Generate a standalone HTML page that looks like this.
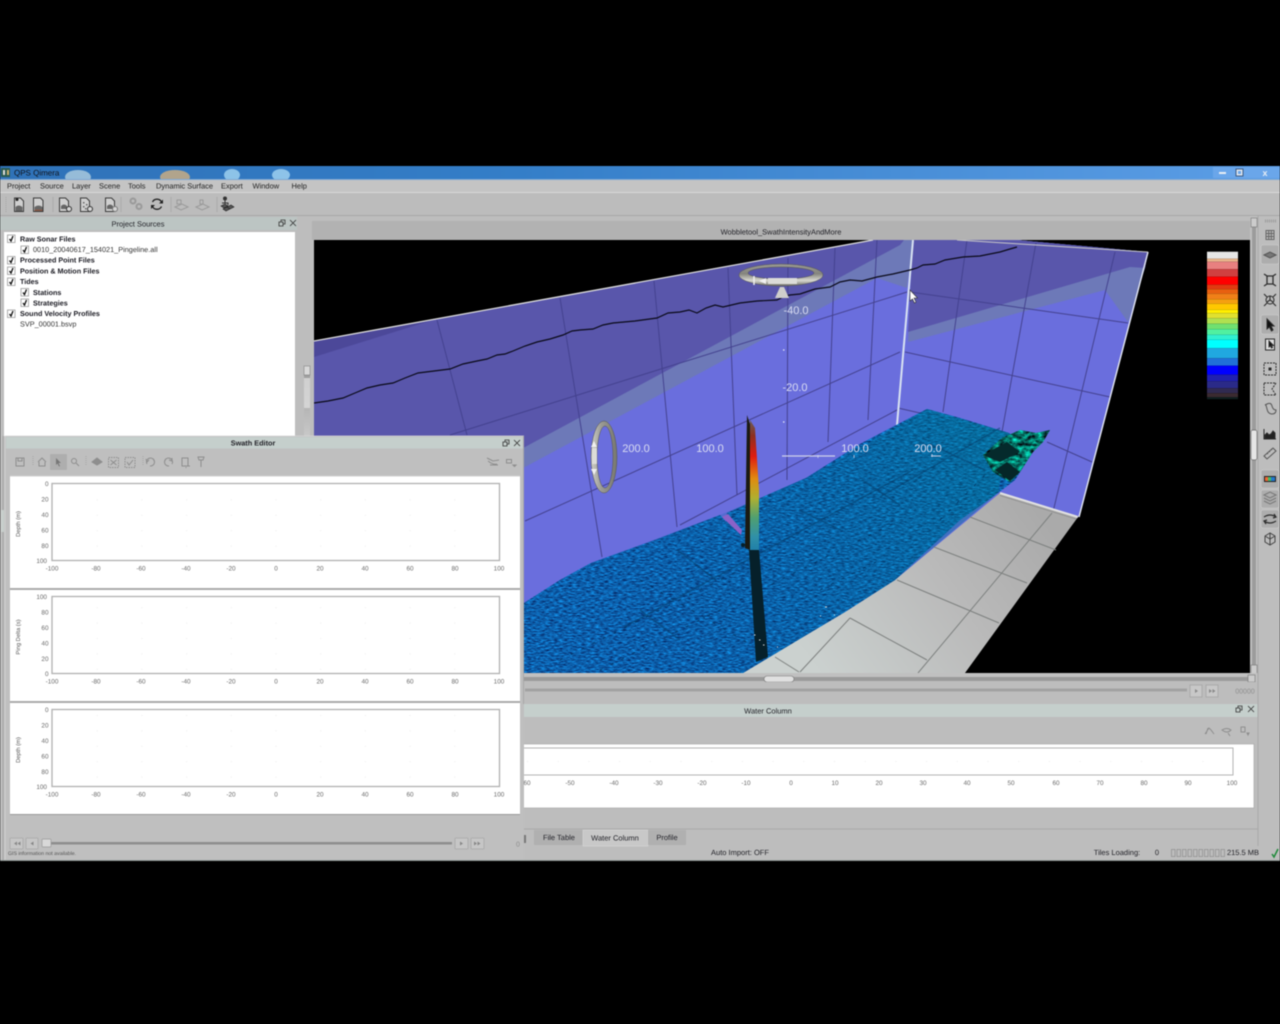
<!DOCTYPE html>
<html><head><meta charset="utf-8"><title>QPS Qimera</title>
<style>
html,body{margin:0;padding:0;background:#000;width:1280px;height:1024px;overflow:hidden}
svg{display:block}
#root{filter:blur(.4px)}
text{font-family:"Liberation Sans",sans-serif;text-rendering:geometricPrecision}
.m{font-size:7.5px;fill:#222}
.b{font-size:7.2px;font-weight:bold;fill:#1a1a22}
.t{font-size:7.5px;fill:#222228;text-anchor:middle}
.x{font-size:6.4px;fill:#6a6a6a;text-anchor:middle}
.d{font-size:5.8px;fill:#555;text-anchor:middle}
.y{font-size:6.4px;fill:#6a6a6a;text-anchor:end}
.l{font-size:11px;fill:#d9dcf2;text-anchor:middle}
.ic{fill:none;stroke:#2c2c2c;stroke-width:1}
.dis{fill:none;stroke:#8e8e8e;stroke-width:1}
.g{stroke:#44428f;stroke-width:1;fill:none}
.f{stroke:#7d807f;stroke-width:1;fill:none}
</style></head><body>
<svg id="root" width="1280" height="1024" viewBox="0 0 1280 1024" xmlns="http://www.w3.org/2000/svg">
<defs>
<linearGradient id="tb" x1="0" x2="1" y1="0" y2="0"><stop offset="0" stop-color="#2f72b8"/><stop offset=".4" stop-color="#347ec8"/><stop offset="1" stop-color="#5c9ee6"/></linearGradient>
<linearGradient id="bar" x1="0" x2="0" y1="0" y2="1"><stop offset="0" stop-color="#808080"/><stop offset=".5" stop-color="#a8a8a8"/><stop offset="1" stop-color="#d0d0d0"/></linearGradient>
<linearGradient id="ring" x1="0" x2="0" y1="0" y2="1"><stop offset="0" stop-color="#9a9a92"/><stop offset=".45" stop-color="#85857e"/><stop offset=".75" stop-color="#d8d8d0"/><stop offset="1" stop-color="#6a6a64"/></linearGradient>
<linearGradient id="ring2" x1="0" x2="1" y1="0" y2="0"><stop offset="0" stop-color="#cfcfc8"/><stop offset=".4" stop-color="#9a9a94"/><stop offset="1" stop-color="#77776f"/></linearGradient>
<linearGradient id="fan" x1="0" x2="0" y1="0" y2="1"><stop offset="0" stop-color="#6a5e58"/><stop offset=".12" stop-color="#8c3020"/><stop offset=".28" stop-color="#e01c10"/><stop offset=".45" stop-color="#e08a10"/><stop offset=".6" stop-color="#b0b030"/><stop offset=".75" stop-color="#50a070"/><stop offset=".9" stop-color="#3090a8"/><stop offset="1" stop-color="#2080a8"/></linearGradient>
<linearGradient id="floor" gradientUnits="userSpaceOnUse" x1="1040" y1="510" x2="820" y2="673"><stop offset="0" stop-color="#aaaaaa"/><stop offset=".45" stop-color="#bababa"/><stop offset="1" stop-color="#cbd1cf"/></linearGradient>
<linearGradient id="sb" gradientUnits="userSpaceOnUse" x1="600" y1="640" x2="1000" y2="430"><stop offset="0" stop-color="#0a50b0" stop-opacity=".1"/><stop offset=".5" stop-color="#006a9c" stop-opacity=".25"/><stop offset="1" stop-color="#007a90" stop-opacity=".5"/></linearGradient>
<filter id="noise" x="0" y="0" width="100%" height="100%" color-interpolation-filters="sRGB">
<feTurbulence type="fractalNoise" baseFrequency=".22 .7" numOctaves="3" seed="7"/>
<feColorMatrix type="matrix" values=".1 0 0 0 0  .8 0 0 0 -.02  1 0 0 0 .17  0 0 0 0 1"/>
<feComposite in2="SourceGraphic" operator="in"/>
</filter>
<filter id="rock" x="0" y="0" width="100%" height="100%" color-interpolation-filters="sRGB">
<feTurbulence type="fractalNoise" baseFrequency=".16 .28" numOctaves="3" seed="3"/>
<feColorMatrix type="matrix" values="0 0 0 0 .02  1.5 0 0 0 -.3  1.2 0 0 0 -.2  0 0 0 0 1"/>
<feComposite in2="SourceGraphic" operator="in"/>
</filter>
<pattern id="dots" patternUnits="userSpaceOnUse" x="52" y="484" width="44.7" height="15.4"><rect x="0" y="0" width="1" height="1" fill="#ececec"/></pattern>
<pattern id="dots2" patternUnits="userSpaceOnUse" x="527" y="748" width="30.7" height="13"><rect x="0" y="0" width="1" height="1" fill="#ececec"/></pattern>
</defs>

<rect width="1280" height="1024" fill="#000"/>
<rect x="0" y="166" width="1280" height="695" fill="#bdbdbd"/>
<!-- title bar -->
<rect x="0" y="166" width="1280" height="13" fill="url(#tb)"/>
<ellipse cx="78" cy="177" rx="13" ry="7" fill="#b9d4e2" opacity=".75"/>
<ellipse cx="175" cy="177" rx="15" ry="7" fill="#c8ad84" opacity=".85"/>
<ellipse cx="232" cy="175" rx="8" ry="6" fill="#a5d6f2" opacity=".8"/>
<ellipse cx="281" cy="175" rx="9" ry="6" fill="#a5d6f2" opacity=".8"/>
<rect x="1" y="168" width="9" height="9" fill="#2a5a50"/><rect x="3" y="170" width="2" height="5" fill="#ddd"/><rect x="7" y="170" width="2" height="5" fill="#c8b070"/>
<text x="14" y="175.5" font-size="8" fill="#10141c">QPS Qimera</text>
<rect x="1213" y="167" width="67" height="11" fill="#6aa6ea"/>
<rect x="1219" y="172" width="7" height="2" fill="#e8eef5"/>
<rect x="1236" y="169" width="7" height="7" fill="#dfe6ef" stroke="#3d5c84"/><rect x="1238" y="171" width="3" height="3" fill="#6aa6ea"/>
<text x="1265" y="176" font-size="9" font-weight="bold" fill="#e8eef5" text-anchor="middle">x</text>
<!-- menu -->
<rect x="0" y="179" width="1280" height="1" fill="#7fa8d4"/>
<rect x="0" y="180" width="1280" height="13" fill="#c4c4c4"/>
<rect x="0" y="192" width="1280" height="1" fill="#d8d8d8"/>
<text class="m" x="7" y="188.5">Project</text>
<text class="m" x="40" y="188.5">Source</text>
<text class="m" x="72" y="188.5">Layer</text>
<text class="m" x="99" y="188.5">Scene</text>
<text class="m" x="128" y="188.5">Tools</text>
<text class="m" x="156" y="188.5">Dynamic Surface</text>
<text class="m" x="221" y="188.5">Export</text>
<text class="m" x="252.500" y="188.5">Window</text>
<text class="m" x="291.500" y="188.5">Help</text>
<!-- toolbar -->
<rect x="0" y="193" width="1280" height="23" fill="#bcbcbc"/>
<rect x="0" y="215" width="1280" height="1" fill="#a8a8a8"/>
<g fill="#cfcfcf" stroke="#3a3a3a" stroke-width="1">
<path d="M14.500 198h6l3 3v10.500h-9z"/>
<path d="M33.500 198h7l2.500 2.500v11h-9.500z"/>
<path d="M59.500 198h6l3 3v10.500h-9z"/>
<path d="M80.500 198h6l3 3v10.500h-9z"/>
<path d="M105.500 198h6l3 3v10.500h-9z"/>
</g>
<g fill="#666">
<path d="M15.500 211v-4q3-3 7 0v4z"/><circle cx="17" cy="199.500" r="1.500" fill="#222"/>
<path d="M34.500 211v-4q4-3 8 0v4z"/><path d="M34.500 211h8v-1.500h-8z" fill="#8a5a48"/>
<path d="M61 206q3-3 6 0v3h-6z"/>
<rect x="83" y="202" width="1.500" height="1.500"/><rect x="86" y="204" width="1.500" height="1.500"/><rect x="83" y="206" width="1.500" height="1.500"/><rect x="85" y="208" width="1.500" height="1.500"/>
<path d="M107 206q3-3 6 0v3h-6z"/>
</g>
<circle cx="69" cy="209" r="2.500" fill="#d5d5d5" stroke="#333"/>
<circle cx="90" cy="209" r="2.500" fill="#d5d5d5" stroke="#333"/>
<circle cx="115" cy="209" r="2.500" fill="#d5d5d5" stroke="#777"/>
<g fill="none" stroke="#9a9a9a">
<circle cx="133" cy="201" r="2.500" stroke-width="2"/><circle cx="139" cy="206.500" r="2.500" stroke-width="2"/>
<path d="M175 207l7-3 6 3-7 3zM177 200h4v4h-4zM196 207l7-3 6 3-7 3zM200 200h3v4h-3z"/>
</g>
<path d="M152.500 202a5 5 0 0 1 9 0M161.500 206.500a5 5 0 0 1-9 0" fill="none" stroke="#222" stroke-width="1.300"/>
<path d="M163 199.500v4h-4zM151 209v-4h4z" fill="#222"/>
<circle cx="225" cy="198.500" r="2" fill="#333"/><path d="M225 200.500v2.500M222 203h6v2" fill="none" stroke="#333"/>
<path d="M221 206l4-2 3 2-4 2zM227 207l4-2 3 2-4 2zM223 209l4-2 3 2-4 2z" fill="#555" stroke="#222" stroke-width=".6"/>
<path d="M6 197v16" stroke="#a4a4a4" stroke-dasharray="1 1"/>
<path d="M53 197v15M121 197v15M171 197v15M217 197v15" stroke="#aaa"/>

<!-- left panel -->
<rect x="0" y="217" width="297" height="13" fill="#bcc5c3"/>
<text class="t" x="138" y="226.500">Project Sources</text>
<path d="M279 222h4v4h-4zM281 222v-2h4v4h-2" fill="none" stroke="#333" stroke-width=".8"/>
<path d="M290 220l6 6M296 220l-6 6" stroke="#333" stroke-width=".8"/>
<rect x="4" y="232" width="291" height="205" fill="#fff"/>
<g fill="#fff" stroke="#9a9a9a" stroke-width=".8">
<rect x="7.500" y="235" width="7.500" height="7.500"/><rect x="21" y="246" width="7.500" height="7.500"/><rect x="7.500" y="256.500" width="7.500" height="7.500"/><rect x="7.500" y="267" width="7.500" height="7.500"/><rect x="7.500" y="278" width="7.500" height="7.500"/><rect x="21" y="288.500" width="7.500" height="7.500"/><rect x="21" y="299" width="7.500" height="7.500"/><rect x="7.500" y="310" width="7.500" height="7.500"/>
</g>
<g fill="none" stroke="#111" stroke-width="1.300">
<path d="M9.500 239l1.500 2 2-5"/><path d="M23 250l1.500 2 2-5"/><path d="M9.500 260.500l1.500 2 2-5"/><path d="M9.500 271l1.500 2 2-5"/><path d="M9.500 282l1.500 2 2-5"/><path d="M23 292.500l1.500 2 2-5"/><path d="M23 303l1.500 2 2-5"/><path d="M9.500 314l1.500 2 2-5"/>
</g>
<text class="b" x="20" y="241.500">Raw Sonar Files</text>
<text x="33" y="252" font-size="7.300" fill="#333">0010_20040617_154021_Pingeline.all</text>
<text class="b" x="20" y="262.500">Processed Point Files</text>
<text class="b" x="20" y="273.500">Position &amp; Motion Files</text>
<text class="b" x="20" y="284">Tides</text>
<text class="b" x="33" y="295">Stations</text>
<text class="b" x="33" y="305.500">Strategies</text>
<text class="b" x="20" y="316">Sound Velocity Profiles</text>
<text x="20" y="326.500" font-size="7.300" fill="#333">SVP_00001.bsvp</text>
<rect x="304" y="366" width="6" height="70" fill="url(#bar)" opacity=".6"/>
<rect x="304" y="366" width="6" height="9" fill="#d8d8d8" stroke="#777" stroke-width=".5"/>
<rect x="304" y="378" width="6" height="30" fill="#dcdcdc" opacity=".8"/>

<!-- view header -->
<rect x="312" y="221" width="940" height="19" fill="#b2b2b2"/>
<text class="t" x="781" y="234.500">Wobbletool_SwathIntensityAndMore</text>

<!-- 3D scene -->
<svg x="314" y="240" width="936" height="433" viewBox="314 240 936 433">
<rect x="314" y="240" width="936" height="433" fill="#000"/>
<polygon points="314,341 873,240 1017,240 1148,252 1079,517 1000,493 800,673 314,673" fill="#6a6edd"/>
<polygon points="314,341 873,240 913,240 907,288 877,278 525,467 314,560" fill="#6d79b8"/>
<polygon points="314,341 873,240 904,240 900,245 525,447 314,540" fill="#5956ab"/>
<polygon points="314,341 436,319 314,357" fill="#4c4899"/>
<polygon points="913,240 1017,240 1148,252 1145,268 1128,322 1105,290 908,342" fill="#6d79b8"/>
<polygon points="913,240 1017,240 1148,252 1145,268 1130,267 908,332" fill="#5956ab"/>
<g class="g">
<path d="M437 320L467 435M560 298L602 557M654 281L677 527M728 268L737 495M788 258L787 480M835 248L828 442M877 240L868 420"/>
<path d="M450 435L907 292M525 521L900 352M680 525L897 410"/>
<path d="M910 292L1128 323M905 352L1110 397M898 408L1003 432M1047 442L1092 462"/>
<path d="M967 240L943 412M1036 243L1002 432M1115 252L1053 512"/>
</g>
<path d="M314 341L873 240" stroke="#dcdcdc" stroke-width="1.300"/>
<path d="M913 240L897 425" stroke="#d8e2f2" stroke-width="2"/>
<path d="M957 240L1148 252" stroke="#c8c8c8" stroke-width="1"/>
<path d="M1148 252L1079 517" stroke="#dce0ee" stroke-width="1.500"/>
<!-- floor -->
<polygon points="1000,493 1078,517 965,673 738,673 895,580" fill="url(#floor)"/>
<path d="M1000 493L1078 517" stroke="#e2e2e2" stroke-width="2"/>
<path d="M1000 495.500L1076 519" stroke="#8c8c8c" stroke-width=".8"/>
<g class="f">
<path d="M970 517L1056 550M934 547L1027 583M897 580L999 623M850 618L927 660M775 657L799 672M1052 513L918 673M850 618L800 672"/>
</g>
<!-- seabed -->
<polygon points="524,603 560,580 591,563 655,540 720,515 726,522 727,513 765,496 806,478 860,444 927,409 960,418 1009,433 1034,450 1015,480 998,493 960,520 895,580 845,612 798,640 738,676 524,676" fill="#0a62b0"/>
<polygon points="524,603 560,580 591,563 655,540 720,515 726,522 727,513 765,496 806,478 860,444 927,409 960,418 1009,433 1034,450 1015,480 998,493 960,520 895,580 845,612 798,640 738,676 524,676" fill="#0a62b0" filter="url(#noise)"/>
<polygon points="524,603 591,563 720,515 806,478 927,409 1009,433 998,493 895,580 798,640 738,676 524,676" fill="url(#sb)"/>
<polygon points="722,517 728,514 742,530 741,535" fill="#8a62c8"/>
<g stroke="#063c6a" stroke-width="1.500" fill="none" opacity=".55">
<path d="M624 627L913 470M677 550L716 580M799 510L841 530M862 480L900 505M930 444L985 470M1000 428L880 497M640 610L680 640"/>
</g>
<g stroke="#04305c" stroke-width="1" fill="none" stroke-dasharray="3 9" opacity=".8">
<path d="M560 660L760 560M600 670L900 520M640 580L760 650M820 590L880 560M940 520L990 470"/>
</g>
<!-- rock -->
<polygon points="983,455 1002,438 1020,430 1036,433 1050,430 1043,442 1033,452 1020,472 1010,482 993,472" fill="#0c5a60"/>
<polygon points="983,455 1002,438 1020,430 1036,433 1050,430 1043,442 1033,452 1020,472 1010,482 993,472" fill="#0c5a60" filter="url(#rock)"/>
<polygon points="983,455 1007,442 1020,452 1000,462" fill="#052a2c"/>
<polygon points="995,470 1007,462 1020,472 1010,481" fill="#052628"/>
<!-- swath fan -->
<polygon points="749,550 759,550 768,657 756,662" fill="#06202a"/>
<polygon points="747,415 750,424 750,550 745,548" fill="#1a1a12"/>
<polygon points="750,420 755,428 759,490 759,550 750,550" fill="url(#fan)"/>
<circle cx="743" cy="545" r="2" fill="#06202c"/>
<path d="M754 635h1.500M759 640h1.500M763 645h1.500M777 647h1M825 607h2M820 616h1M834 615h1" stroke="#dcdcdc" fill="none"/>
<!-- navigation line -->
<path d="M314 403L328 401 343 398 355 393 367 388 380 385 393 383 405 378 418 373 434 371 450 369 463 364 477 361 487 359 497 355 505 354 513 351 525 346 537 342 550 339 563 335 572 331 580 330 593 329 603 325 613 323 635 321 657 318 668 313 680 312 689 310 697 313 706 308 715 305 723 307 740 303 757 301 777 300 785 296 790 295 800 294 815 289 830 287 840 282 850 280 862 281 877 277 893 274 910 270 917 268 923 265 935 264 945 260 963 257 980 256 1000 252 1010 249 1017 247" fill="none" stroke="#0a0a18" stroke-width="1.200"/>
<!-- axis -->
<path d="M782 456H835" stroke="#d0d3ea" stroke-width="1.300"/>
<path d="M818 455v3M854 455v3M932 454v3" stroke="#d0d3ea" stroke-width=".8"/>
<path d="M783 350h1.500M783 422h1.500" stroke="#e6e8f6" stroke-width="1.300"/>
<path d="M931 456h10" stroke="#c8cbe4"/>
<text class="l" x="636" y="452">200.0</text>
<text class="l" x="710" y="452">100.0</text>
<text class="l" x="855" y="452">100.0</text>
<text class="l" x="928" y="452">200.0</text>
<text class="l" x="796" y="314">-40.0</text>
<text class="l" x="795" y="391">-20.0</text>
<!-- compass -->
<polygon points="780,287 784,287 789,298 775,298" fill="#cfcfcb"/>
<path fill-rule="evenodd" fill="url(#ring)" stroke="#555" stroke-width=".5" d="M739 275a42 11 0 1 0 84 0a42 11 0 1 0-84 0zM748 273a33 6 0 1 1 66 0a33 6 0 1 1-66 0z"/>
<path d="M754 276V285" stroke="#f0f0f0" stroke-width="1.500"/>
<polygon points="759,281 766,278 766,284" fill="#f0f0f0"/>
<rect x="768" y="278" width="29" height="6" fill="#dcdcd8"/>
<!-- pitch ring -->
<path fill-rule="evenodd" fill="url(#ring2)" stroke="#555" stroke-width=".5" d="M591 457a13 36 0 1 0 26 0a13 36 0 1 0-26 0zM597 457a8 31 0 1 1 16 0a8 31 0 1 1-16 0z" />
<rect x="592" y="448" width="5" height="16" fill="#dcdcd8"/>
<polygon points="594,441 597,447 591,447" fill="#f0f0f0"/><polygon points="594,475 597,469 591,469" fill="#f0f0f0"/>
<!-- cursor -->
<path d="M910 290v11l2.500-2 2 4 1.500-1-2-4h3.500z" fill="#fff" stroke="#333" stroke-width=".6"/>
<!-- colorbar -->
<g>
<rect x="1207" y="251.700" width="31" height="7" fill="#e6e6e6"/>
<rect x="1207" y="258.700" width="31" height="3" fill="#e8b58c"/>
<rect x="1207" y="261.700" width="31" height="7.500" fill="#e88080"/>
<rect x="1207" y="269.200" width="31" height="7.500" fill="#d04040"/>
<rect x="1207" y="276.700" width="31" height="8" fill="#ff0000"/>
<rect x="1207" y="284.700" width="31" height="4.500" fill="#e23a10"/>
<rect x="1207" y="289.200" width="31" height="4.500" fill="#e86010"/>
<rect x="1207" y="293.700" width="31" height="5.500" fill="#f08018"/>
<rect x="1207" y="299.200" width="31" height="4.500" fill="#f5a010"/>
<rect x="1207" y="303.700" width="31" height="6" fill="#ffc800"/>
<rect x="1207" y="309.700" width="31" height="3.500" fill="#ffee00"/>
<rect x="1207" y="313.200" width="31" height="5" fill="#e0e030"/>
<rect x="1207" y="318.200" width="31" height="5.500" fill="#b0e050"/>
<rect x="1207" y="323.700" width="31" height="5.500" fill="#70e070"/>
<rect x="1207" y="329.200" width="31" height="5.500" fill="#50f0a0"/>
<rect x="1207" y="334.700" width="31" height="5" fill="#30f0d0"/>
<rect x="1207" y="339.700" width="31" height="8.500" fill="#00ffff"/>
<rect x="1207" y="348.200" width="31" height="10" fill="#20a8e0"/>
<rect x="1207" y="358.200" width="31" height="7.500" fill="#2070d8"/>
<rect x="1207" y="365.700" width="31" height="9" fill="#0000ff"/>
<rect x="1207" y="374.700" width="31" height="6.500" fill="#2020b0"/>
<rect x="1207" y="381.200" width="31" height="7" fill="#2a2a88"/>
<rect x="1207" y="388.200" width="31" height="5" fill="#302a50"/>
<rect x="1207" y="393.200" width="31" height="4" fill="#3a2a30"/>
<rect x="1207" y="397.200" width="31" height="2" fill="#102020"/>
</g>
</svg>

<!-- vertical scrollbar -->
<rect x="1250" y="216" width="8" height="462" fill="#c0c0c0"/>
<rect x="1252" y="220" width="4" height="455" fill="#9c9c9c"/>
<rect x="1251" y="218" width="6" height="9" fill="#ccc" stroke="#666" stroke-width=".5"/>
<rect x="1251" y="430" width="6" height="30" rx="2" fill="#e6e6e6" stroke="#666" stroke-width=".7"/>
<rect x="1251" y="665" width="6" height="9" fill="#ccc" stroke="#666" stroke-width=".5"/>
<!-- horizontal scrollbar -->
<rect x="523" y="673" width="735" height="8" fill="#c0c0c0"/>
<rect x="523" y="677" width="730" height="4" fill="#9a9a9a"/>
<rect x="764" y="676" width="30" height="6" rx="3" fill="#e0e0e0" stroke="#777" stroke-width=".6"/>
<rect x="1248" y="675" width="7" height="7" fill="#ccc" stroke="#666" stroke-width=".5"/>
<!-- player bar -->
<rect x="523" y="682" width="735" height="22" fill="#bdbdbd"/>
<rect x="525" y="688.500" width="662" height="3" fill="#a2a2a2"/>
<rect x="1190" y="685" width="12" height="12" fill="#c8c8c8" stroke="#aaa"/>
<rect x="1206" y="685" width="12" height="12" fill="#c8c8c8" stroke="#aaa"/>
<path d="M1195 689v4l3-2zM1209 689v4l3-2zM1212.500 689v4l3-2z" fill="#8a8a8a"/>
<text x="1245" y="693.500" font-size="7" fill="#8f8f8f" text-anchor="middle">00000</text>
<!-- water column -->
<rect x="523" y="704" width="735" height="13" fill="#c5cfcc"/>
<text class="t" x="768" y="713.500">Water Column</text>
<path d="M1236 708h4v4h-4zM1238 708v-2h4v4h-2" fill="none" stroke="#333" stroke-width=".8"/>
<path d="M1248 706l6 6M1254 706l-6 6" stroke="#333" stroke-width=".8"/>
<g class="dis"><path d="M1205 734l4-6 2 2 3 4M1208 728l-2 6"/><path d="M1222 730q5-3 9 0-4 4-9 0zM1228 733l2 3"/><rect x="1241" y="727" width="4" height="5"/><path d="M1247 733l2 0-1 2z" fill="#666"/></g>
<rect x="523" y="744" width="731" height="64" fill="#fff" stroke="#aaa" stroke-width=".7"/>
<rect x="523" y="748" width="710" height="27" fill="#fff" stroke="#b4b4b4"/>
<rect x="524" y="749" width="708" height="25" fill="url(#dots2)"/>
<g>
<text class="x" x="527" y="785">60</text><text class="x" x="570" y="785">-50</text><text class="x" x="614" y="785">-40</text><text class="x" x="658" y="785">-30</text><text class="x" x="702" y="785">-20</text><text class="x" x="746" y="785">-10</text><text class="x" x="791" y="785">0</text><text class="x" x="835" y="785">10</text><text class="x" x="879" y="785">20</text><text class="x" x="923" y="785">30</text><text class="x" x="967" y="785">40</text><text class="x" x="1011" y="785">50</text><text class="x" x="1056" y="785">60</text><text class="x" x="1100" y="785">70</text><text class="x" x="1144" y="785">80</text><text class="x" x="1188" y="785">90</text><text class="x" x="1232" y="785">100</text>
</g>
<!-- tabs -->
<path d="M523 829H1258" stroke="#a8a8a8"/>
<rect x="534" y="830" width="49" height="15" fill="#b0b0b0"/>
<rect x="583" y="830" width="65" height="16" fill="#c8c8c8" stroke="#d8d8d8" stroke-width=".6"/>
<rect x="648" y="830" width="38" height="15" fill="#b0b0b0"/>
<text class="t" x="559" y="840">File Table</text>
<text class="t" x="615" y="840.500">Water Column</text>
<text class="t" x="667" y="840">Profile</text>

<!-- right toolbar -->
<rect x="1258" y="216" width="22" height="630" fill="#bdbdbd"/>
<path d="M1258 216V846" stroke="#a8a8a8"/>
<path d="M1265 221h11" stroke="#9a9a9a" stroke-dasharray="1 1" stroke-width="3"/>
<rect x="1261" y="245" width="18" height="19" rx="2" fill="#adadad" stroke="#d0d0d0" stroke-width=".6"/>
<rect x="1261" y="315" width="18" height="19" rx="2" fill="#adadad" stroke="#d0d0d0" stroke-width=".6"/>
<rect x="1261" y="470" width="18" height="18" rx="2" fill="#adadad" stroke="#d0d0d0" stroke-width=".6"/>
<rect x="1261" y="490" width="18" height="18" rx="2" fill="#adadad" stroke="#d0d0d0" stroke-width=".6"/>
<rect x="1261" y="510" width="18" height="18" rx="2" fill="#adadad" stroke="#d0d0d0" stroke-width=".6"/>
<g class="ic">
<path d="M1266 230.500h8v9h-8zM1266 233.500h8M1266 236.500h8M1268.700 230.500v9M1271.300 230.500v9" stroke="#666"/>
<path d="M1264 255l6-3 6 3-6 3z" fill="#777" stroke="#555"/>
<path d="M1264 274l3 2h6l3-2M1264 286l3-2h6l3 2M1267 276v8M1273 276v8" stroke-width="1.300"/>
<circle cx="1270" cy="300" r="4"/><path d="M1264 294l3 3M1276 294l-3 3M1264 306l3-3M1276 306l-3-3M1270 296v4l3 2M1270 300l-3 2" stroke-width="1.100"/>
<path d="M1267 319v10l2.500-2 2 4 1.500-1-2-4h3z" fill="#111"/>
<rect x="1265.500" y="339" width="9" height="11" fill="#ddd"/><path d="M1269 341v6l1.500-1 1 2 1-.500-1-2h2z" fill="#111"/>
<rect x="1264" y="363" width="12" height="12" stroke-dasharray="2 1"/><rect x="1269" y="368" width="2" height="2" fill="#222"/>
<path d="M1264 383h12l-4 6 4 6h-12z" stroke-dasharray="2 1"/>
<path d="M1267 404q4-2 5 2t4 4q0 4-4 4t-5-5-2-4z" stroke="#555"/>
<path d="M1264 429v10h12" stroke-width="1"/><path d="M1265 439v-4l2-2 2 2 2-1 2-3 2 2v6z" fill="#222"/>
<path d="M1264 456l9-8 3 3-9 8zM1267 453l1 1M1269 451l1 1M1271 449l1 1" stroke="#555"/>
<path d="M1264 495l6-3 6 3-6 3zM1264 498l6 3 6-3M1264 501l6 3 6-3" stroke="#777"/>
<path d="M1264 517q6-4 12 0M1276 521q-6 4-12 0M1274 514l2 3-3 1M1266 524l-2-3 3-1" stroke-width="1.200"/>
<path d="M1265 536l5-3 5 3v6l-5 3-5-3zM1270 533v12M1265 536l5 3 5-3" stroke="#444"/>
</g>
<rect x="1264" y="476" width="12" height="6" fill="#222"/>
<rect x="1265" y="477" width="3" height="4" fill="#e63"/><rect x="1268" y="477" width="3" height="4" fill="#4b6"/><rect x="1271" y="477" width="4" height="4" fill="#27c"/>

<!-- status -->
<text class="t" x="740" y="855">Auto Import: OFF</text>
<text class="t" x="1117" y="855">Tiles Loading:</text>
<text class="t" x="1157" y="855">0</text>
<g fill="none" stroke="#8e8e8e" stroke-width=".7">
<rect x="1171.500" y="849.500" width="3.500" height="7"/><rect x="1177" y="849.500" width="3.500" height="7"/><rect x="1182.500" y="849.500" width="3.500" height="7"/><rect x="1188" y="849.500" width="3.500" height="7"/><rect x="1193.500" y="849.500" width="3.500" height="7"/><rect x="1199" y="849.500" width="3.500" height="7"/><rect x="1204.500" y="849.500" width="3.500" height="7"/><rect x="1210" y="849.500" width="3.500" height="7"/><rect x="1215.500" y="849.500" width="3.500" height="7"/><rect x="1221" y="849.500" width="3.500" height="7"/>
</g>
<text class="t" x="1243" y="855">215.5 MB</text>
<path d="M1272 854l2 3 4-8" fill="none" stroke="#1f8a3a" stroke-width="1.500"/>

<!-- swath editor window -->
<rect x="0" y="436" width="5" height="425" fill="#bdbdbd"/>
<path d="M3 436V861" stroke="#a4a4a4"/>
<rect x="1" y="510" width="3" height="22" fill="#c8cfcc"/>
<rect x="5" y="436" width="519" height="425" fill="#bfbfbf"/>
<path d="M5 436H524M5 436V861" stroke="#d8d8d8" stroke-width=".7"/>
<path d="M523.500 436V704" stroke="#a8a8a8"/>
<rect x="6" y="437" width="517" height="11.500" fill="#c5cfcc"/>
<text class="t" x="253" y="445.500" font-weight="bold" style="font-size:7.3px">Swath Editor</text>
<path d="M503 442h4v4h-4zM505 442v-2h4v4h-2" fill="none" stroke="#333" stroke-width=".8"/>
<path d="M514 440l6 6M520 440l-6 6" stroke="#333" stroke-width=".8"/>
<rect x="50" y="454" width="17" height="16" rx="1.500" fill="#aeaeae"/>
<path d="M56 458v7l1.500-1.500 1.500 3 1-.500-1.500-3h2.500z" fill="#777"/>
<g class="dis">
<path d="M16 458h8v8h-8zM18 458v3h4v-3"/>
<path d="M38 462l4-4 4 4M39 462v4h6v-4"/>
<circle cx="74" cy="461" r="2.500"/><path d="M76 463l3 3"/>
<path d="M92 462l5-4 5 4-5 3z" fill="#8e8e8e"/>
<rect x="108.500" y="457.500" width="10" height="10" stroke-dasharray="1.500 1"/><path d="M110.500 460l6 5M116.500 460l-6 5"/>
<rect x="125" y="457.500" width="10" height="10" stroke-dasharray="1.500 1"/><path d="M127 462l2 3 4-5"/>
<path d="M147 464a4 4 0 1 1 3 2M146 459l1 3 2-2"/>
<path d="M172 464a4 4 0 1 0-3 2M172 458l0 3-3-1"/>
<path d="M182 458h6v8h-6zM188 466l2 0M186 467v1"/>
<path d="M198 457h6l-1 3h-4zM201 460v7"/>
<path d="M487 458l6 3 6-1M488 461q5 4 9 3M490 465h8"/><rect x="506.500" y="459.500" width="5" height="3.500"/><path d="M513 465l3 0-1.500 1.500z" fill="#8e8e8e"/>
</g>
<path d="M33 456v10M86 456v10M143 456v10" stroke="#a8a8a8" stroke-dasharray="1 1"/>
<!-- plots -->
<rect x="10" y="476" width="510" height="338" fill="#fff"/>
<path d="M10 476H520" stroke="#cfcfcf"/>
<path d="M10 814.500H520" stroke="#999"/>
<rect x="10" y="588" width="510" height="2" fill="#aaa"/>
<rect x="10" y="701" width="510" height="2" fill="#aaa"/>
<g fill="#fff" stroke="#b0b0b0" stroke-width="1.300">
<rect x="52" y="483.500" width="447.500" height="77"/>
<rect x="52" y="596.500" width="447.500" height="77"/>
<rect x="52" y="709.500" width="447.500" height="77"/>
</g>
<rect x="53" y="485" width="445" height="74" fill="url(#dots)"/>
<rect x="53" y="598" width="445" height="74" fill="url(#dots)"/>
<rect x="53" y="711" width="445" height="74" fill="url(#dots)"/>
<g>
<text class="y" x="48.500" y="486">0</text><text class="y" x="48.500" y="501.500">20</text><text class="y" x="48.500" y="517">40</text><text class="y" x="48.500" y="532.500">60</text><text class="y" x="48.500" y="548">80</text><text class="y" x="47" y="563">100</text>
<text class="x" x="52" y="570.500">-100</text><text class="x" x="96" y="570.500">-80</text><text class="x" x="141" y="570.500">-60</text><text class="x" x="186" y="570.500">-40</text><text class="x" x="231" y="570.500">-20</text><text class="x" x="276" y="570.500">0</text><text class="x" x="320" y="570.500">20</text><text class="x" x="365" y="570.500">40</text><text class="x" x="410" y="570.500">60</text><text class="x" x="455" y="570.500">80</text><text class="x" x="499" y="570.500">100</text>
<text class="d" transform="translate(20 524) rotate(-90)">Depth (m)</text>

<text class="y" x="47" y="599">100</text><text class="y" x="48.500" y="614.500">80</text><text class="y" x="48.500" y="630">60</text><text class="y" x="48.500" y="645.500">40</text><text class="y" x="48.500" y="661">20</text><text class="y" x="48.500" y="676">0</text>
<text class="x" x="52" y="683.500">-100</text><text class="x" x="96" y="683.500">-80</text><text class="x" x="141" y="683.500">-60</text><text class="x" x="186" y="683.500">-40</text><text class="x" x="231" y="683.500">-20</text><text class="x" x="276" y="683.500">0</text><text class="x" x="320" y="683.500">20</text><text class="x" x="365" y="683.500">40</text><text class="x" x="410" y="683.500">60</text><text class="x" x="455" y="683.500">80</text><text class="x" x="499" y="683.500">100</text>
<text class="d" transform="translate(20 637) rotate(-90)">Ping Delta (s)</text>

<text class="y" x="48.500" y="712">0</text><text class="y" x="48.500" y="727.500">20</text><text class="y" x="48.500" y="743">40</text><text class="y" x="48.500" y="758.500">60</text><text class="y" x="48.500" y="774">80</text><text class="y" x="47" y="789">100</text>
<text class="x" x="52" y="796.500">-100</text><text class="x" x="96" y="796.500">-80</text><text class="x" x="141" y="796.500">-60</text><text class="x" x="186" y="796.500">-40</text><text class="x" x="231" y="796.500">-20</text><text class="x" x="276" y="796.500">0</text><text class="x" x="320" y="796.500">20</text><text class="x" x="365" y="796.500">40</text><text class="x" x="410" y="796.500">60</text><text class="x" x="455" y="796.500">80</text><text class="x" x="499" y="796.500">100</text>
<text class="d" transform="translate(20 750) rotate(-90)">Depth (m)</text>
</g>
<!-- swath slider -->
<g fill="#c6c6c6" stroke="#a8a8a8" stroke-width=".8">
<rect x="10" y="838" width="13" height="11" rx="1"/><rect x="26" y="838" width="12" height="11" rx="1"/>
<rect x="455" y="838" width="13" height="11" rx="1"/><rect x="471" y="838" width="13" height="11" rx="1"/>
</g>
<rect x="46" y="842" width="406" height="2.500" fill="#8e8e8e"/>
<rect x="42" y="839" width="9" height="8" rx="1" fill="#d8d8d8" stroke="#999" stroke-width=".7"/>
<path d="M17 841.500v4l-3-2zM20.500 841.500v4l-3-2zM33.500 841.500v4l-3-2zM460 841.500v4l3-2zM474 841.500v4l3-2zM477.500 841.500v4l3-2z" fill="#888"/>
<text x="518" y="846.500" font-size="7" fill="#8f8f8f" text-anchor="middle">0</text>
<text x="8" y="855" font-size="5.200" fill="#555">GIS information not available.</text>
<rect x="524" y="835" width="2" height="8" fill="#333" opacity=".5"/>
<rect x="0" y="860" width="1280" height="1" fill="#8c9693"/>
</svg>
</body></html>
